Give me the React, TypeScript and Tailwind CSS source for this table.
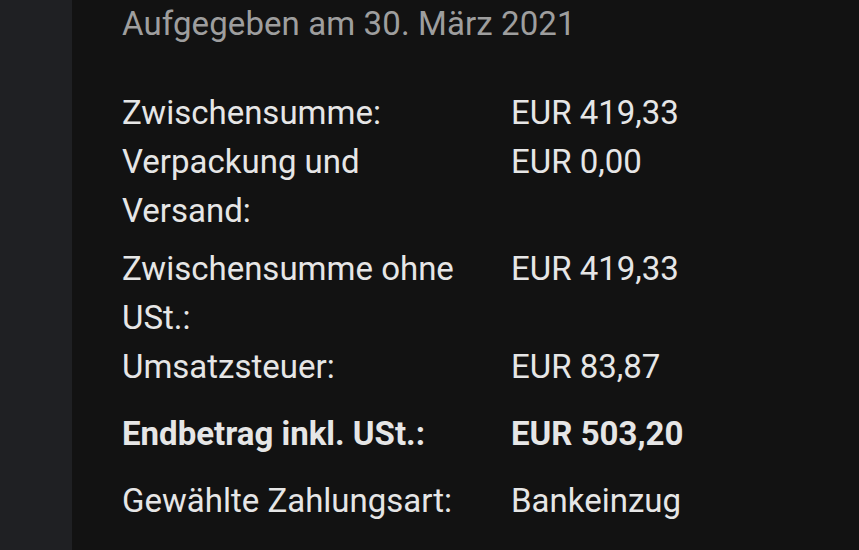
export default function App() {
  const rows = [
    { label: "Zwischensumme:", value: "EUR 419,33", mt: "mt-0" },
    { label: "Verpackung und Versand:", value: "EUR 0,00", mt: "mt-0" },
    { label: "Zwischensumme ohne USt.:", value: "EUR 419,33", mt: "mt-[9px]" },
    { label: "Umsatzsteuer:", value: "EUR 83,87", mt: "mt-0" },
    { label: "Endbetrag inkl. USt.:", value: "EUR 503,20", mt: "mt-[18px]", bold: true },
    { label: "Gewählte Zahlungsart:", value: "Bankeinzug", mt: "mt-[18px]" },
  ];

  return (
    <div
      className="flex h-[550px] w-[859px] overflow-hidden bg-[#121212]"
      style={{ fontFamily: "Roboto, 'Noto Sans', sans-serif" }}
    >
      <div className="w-[72px] shrink-0 bg-[#1f2023]" />
      <div className="flex-1 pl-[50px]">
        <h2 className="text-[33px] leading-[47px] font-normal tracking-[0.1px] text-[#9e9e9e]">
          Aufgegeben am 30. März 2021
        </h2>
        <div className="mt-[41px]">
          {rows.map((row, i) => (
            <div
              key={i}
              className={`grid grid-cols-[389px_1fr] text-[33px] leading-[49px] text-[#e6e6e6] ${row.mt} ${
                row.bold ? "font-bold" : "font-normal"
              }`}
            >
              <div className="pr-4">{row.label}</div>
              <div>{row.value}</div>
            </div>
          ))}
        </div>
      </div>
    </div>
  );
}
